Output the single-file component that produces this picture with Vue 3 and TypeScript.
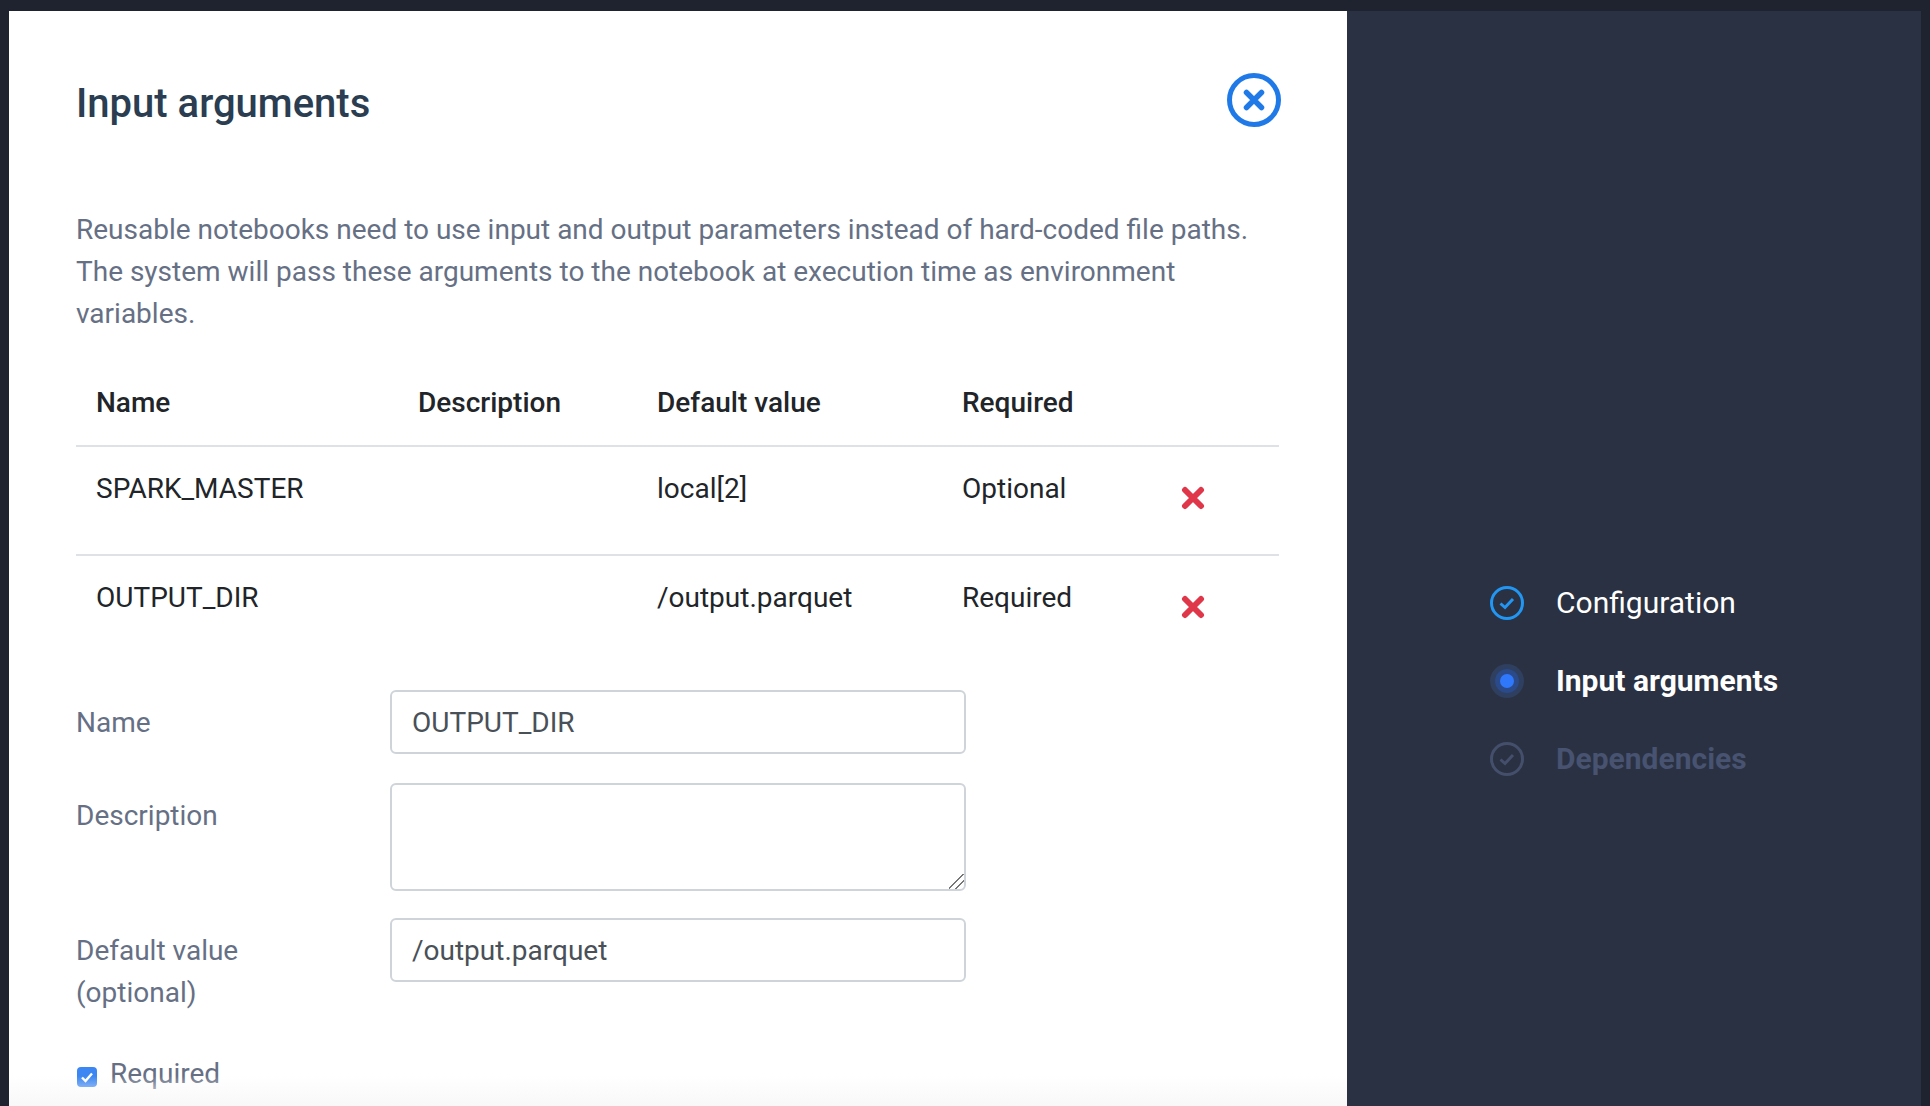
<script setup lang="ts">
interface Arg { name: string; value: string; required: string }
const args: Arg[] = [
  { name: 'SPARK_MASTER', value: 'local[2]', required: 'Optional' },
  { name: 'OUTPUT_DIR', value: '/output.parquet', required: 'Required' },
]
</script>

<template>
  <div class="page">
    <main class="modal">
      <header class="head">
        <h1>Input arguments</h1>
        <svg class="close" viewBox="0 0 54 54" aria-label="Close">
          <circle cx="27" cy="27" r="24.5" fill="none" stroke="#1f7ae8" stroke-width="5" />
          <path d="M19.5 19.5 34.5 34.5M34.5 19.5 19.5 34.5" fill="none" stroke="#1f7ae8" stroke-width="5.5" stroke-linecap="round" />
        </svg>
      </header>
      <p class="intro">
        Reusable notebooks need to use input and output parameters instead of hard-coded file paths.
        The system will pass these arguments to the notebook at execution time as environment variables.
      </p>
      <table class="args">
        <thead>
          <tr>
            <th class="c1">Name</th>
            <th class="c2">Description</th>
            <th class="c3">Default value</th>
            <th class="c4">Required</th>
            <th class="c5"></th>
          </tr>
        </thead>
        <tbody>
          <tr v-for="a in args" :key="a.name">
            <td>{{ a.name }}</td>
            <td></td>
            <td>{{ a.value }}</td>
            <td>{{ a.required }}</td>
            <td class="del">
              <svg viewBox="0 0 24 24" width="24" height="24" aria-label="Delete">
                <path d="M4 4 20 20M20 4 4 20" fill="none" stroke="#e03649" stroke-width="6" stroke-linecap="round" />
              </svg>
            </td>
          </tr>
        </tbody>
      </table>
      <form class="form">
        <label class="lbl one">Name</label>
        <input class="field" type="text" value="OUTPUT_DIR" />
        <label class="lbl">Description</label>
        <textarea class="field area"></textarea>
        <label class="lbl">Default value<br />(optional)</label>
        <input class="field" type="text" value="/output.parquet" />
      </form>
      <label class="req">
        <span class="box">
          <svg viewBox="0 0 20 20" width="20" height="20"><path d="M5 10.5 8.5 14 15 6.5" fill="none" stroke="#fff" stroke-width="2.4" /></svg>
        </span>
        Required
      </label>
      <div class="fade"></div>
    </main>
    <aside class="side">
      <ul class="steps">
        <li class="step done">
          <svg viewBox="0 0 34 34" width="34" height="34">
            <circle cx="17" cy="17" r="15.5" fill="none" stroke="#2196f3" stroke-width="3" />
            <path d="M10.5 17.5 15 21.5 23 13" fill="none" stroke="#2196f3" stroke-width="3" />
          </svg>
          <span>Configuration</span>
        </li>
        <li class="step active">
          <svg viewBox="0 0 34 34" width="34" height="34">
            <circle cx="17" cy="17" r="17" fill="#2f3f60" />
            <circle cx="17" cy="17" r="12" fill="#2a4a8a" />
            <circle cx="17" cy="17" r="7" fill="#3078fb" />
          </svg>
          <span>Input arguments</span>
        </li>
        <li class="step todo">
          <svg viewBox="0 0 34 34" width="34" height="34">
            <circle cx="17" cy="17" r="15.5" fill="none" stroke="#444f6b" stroke-width="3" />
            <path d="M10.5 17.5 15 21.5 23 13" fill="none" stroke="#444f6b" stroke-width="3" />
          </svg>
          <span>Dependencies</span>
        </li>
      </ul>
    </aside>
  </div>
</template>

<style>
html, body { margin: 0; background: #1e232f; }
</style>

<style scoped>
.page {
  display: flex;
  height: 1106px;
  box-sizing: border-box;
  padding: 11px 9px 0;
  overflow: hidden;
  background: #1e232f;
  font-family: Roboto, "Liberation Sans", sans-serif;
}
.modal {
  position: relative;
  width: 1338px;
  flex: none;
  box-sizing: border-box;
  padding: 62px 0 0 67px;
  background: #fff;
}
.head {
  display: flex;
  justify-content: space-between;
  align-items: flex-start;
  width: 1205px;
}
h1 {
  margin: 0;
  padding-top: 7px;
  font-size: 40px;
  line-height: 48px;
  font-weight: 500;
  color: #2a3d51;
}
.close { width: 54px; height: 54px; }
.intro {
  width: 1203px;
  margin: 81px 0 0;
  font-size: 28px;
  line-height: 42px;
  color: #667085;
}
.args {
  width: 1203px;
  margin-top: 23px;
  border-collapse: collapse;
  table-layout: fixed;
  font-size: 28px;
  color: #212529;
}
.c1 { width: 322px; }
.c2 { width: 239px; }
.c3 { width: 305px; }
.c4 { width: 197px; }
.c5 { width: 140px; }
th {
  box-sizing: border-box;
  height: 88px;
  padding: 2px 20px 0;
  font-weight: 500;
  text-align: left;
  border-bottom: 2px solid #dee2e6;
}
td {
  height: 109px;
  padding: 21px 20px 0;
  box-sizing: border-box;
  vertical-align: top;
  line-height: 42px;
}
tbody tr:first-child td { border-bottom: 2px solid #dee2e6; }
.del svg { display: block; margin: 18px 0 0 22px; }
.form {
  display: grid;
  grid-template-columns: 314px 576px;
  row-gap: 29px;
  margin-top: 26px;
}
.lbl {
  padding-top: 12px;
  font-size: 28px;
  line-height: 42px;
  color: #667085;
}
.field {
  display: block;
  width: 576px;
  height: 64px;
  box-sizing: border-box;
  padding: 0 20px;
  border: 2px solid #ced4da;
  border-radius: 6px;
  background: #fff;
  font: 28px Roboto, "Liberation Sans", sans-serif;
  color: #495057;
  outline: none;
}
.area { height: 108px; margin-bottom: -2px; }
.area::-webkit-resizer {
  background: linear-gradient(135deg, transparent 0 46%, #777 46% 53%, transparent 53% 68%, #777 68% 75%, transparent 75%);
}
.req {
  display: flex;
  align-items: center;
  gap: 13px;
  margin-top: 39px;
  font-size: 28px;
  line-height: 42px;
  color: #667085;
}
.box {
  display: block;
  width: 20px;
  height: 20px;
  margin: 5px 0 0 1px;
  border-radius: 4px;
  background: #3b86f2;
}
.box svg { display: block; }
.fade {
  position: absolute;
  left: 0;
  right: 0;
  bottom: 0;
  height: 30px;
  background: linear-gradient(rgba(248, 248, 248, 0), #f8f8f8);
}
.side {
  flex: 1;
  box-sizing: border-box;
  padding: 575px 0 0 143px;
  background: #2a3142;
}
.steps {
  margin: 0;
  padding: 0;
  list-style: none;
  display: flex;
  flex-direction: column;
  gap: 44px;
}
.step {
  display: flex;
  align-items: center;
  gap: 32px;
  height: 34px;
  font-size: 30px;
}
.step span { margin-top: -2px; }
.done { color: #fff; }
.active { color: #fff; font-weight: 700; }
.todo { color: #475370; font-weight: 700; }
</style>
